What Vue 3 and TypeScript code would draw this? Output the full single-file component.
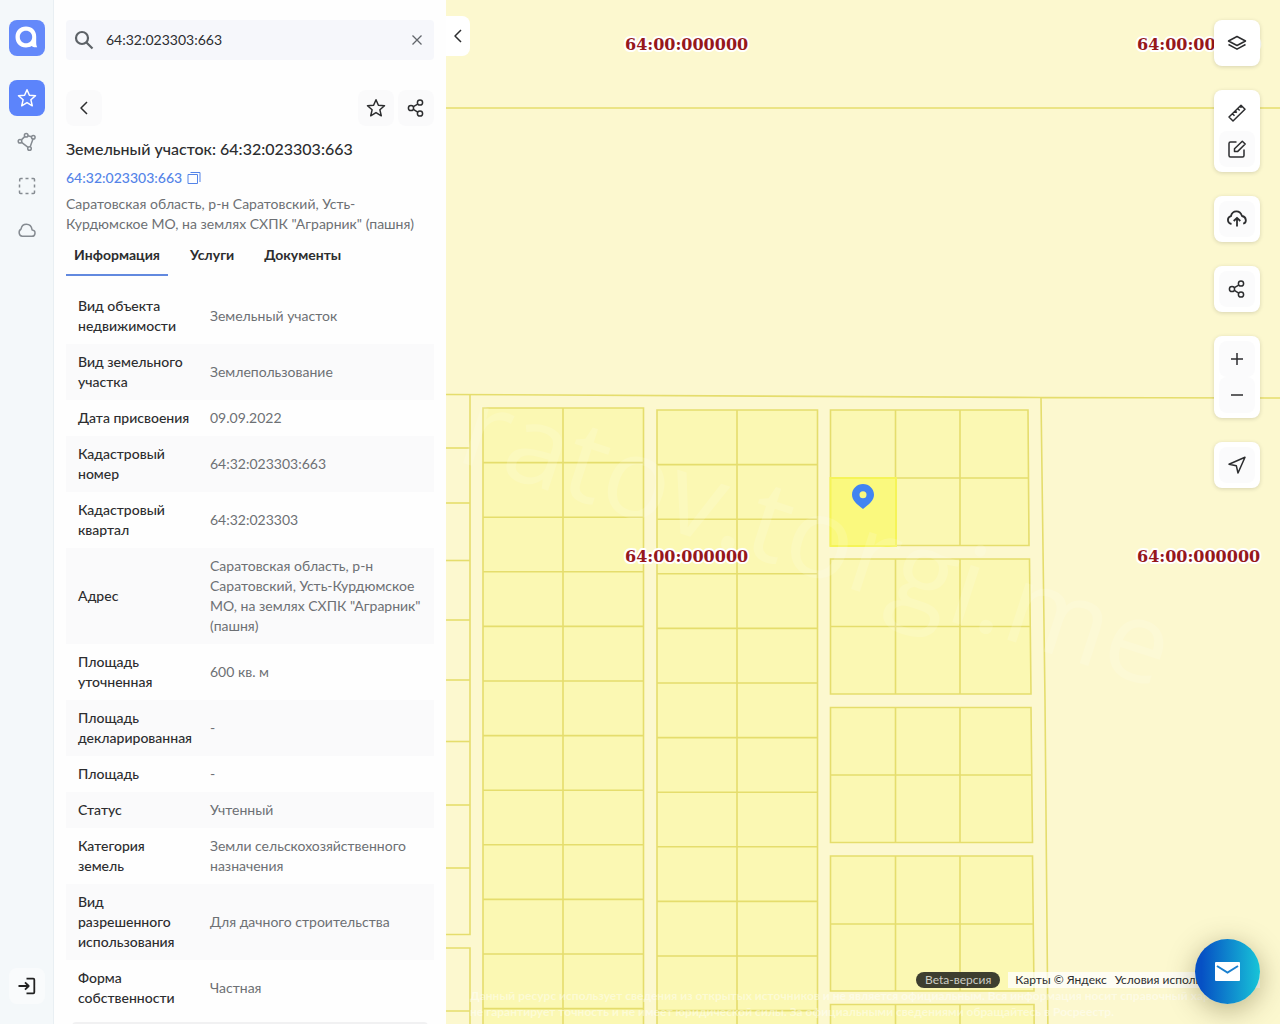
<script setup lang="ts">
import { ref } from 'vue'

interface Row { name: string; value: string }
interface Block { top: number; middle: number; bottom: number; rightTop: number; rightBottom: number }

const query = ref('64:32:023303:663')
const activeTab = ref('Информация')
const tabs = ['Информация', 'Услуги', 'Документы']

const rows: Row[] = [
  { name: 'Вид объекта недвижимости', value: 'Земельный участок' },
  { name: 'Вид земельного участка', value: 'Землепользование' },
  { name: 'Дата присвоения', value: '09.09.2022' },
  { name: 'Кадастровый номер', value: '64:32:023303:663' },
  { name: 'Кадастровый квартал', value: '64:32:023303' },
  { name: 'Адрес', value: 'Саратовская область, р-н Саратовский, Усть-Курдюмское МО, на землях СХПК "Аграрник" (пашня)' },
  { name: 'Площадь уточненная', value: '600 кв. м' },
  { name: 'Площадь декларированная', value: '-' },
  { name: 'Площадь', value: '-' },
  { name: 'Статус', value: 'Учтенный' },
  { name: 'Категория земель', value: 'Земли сельскохозяйственного назначения' },
  { name: 'Вид разрешенного использования', value: 'Для дачного строительства' },
  { name: 'Форма собственности', value: 'Частная' },
]

// Map geometry, measured from the left edge of the map
const step = 54.6
const strips = [
  { x: 37, y: 408 },
  { x: 211, y: 410 },
]
const edgeLines = [448, 503, 560.5, 620, 680, 741.5, 805, 868]
const blocks: Block[] = [
  { top: 410, middle: 478, bottom: 545.5, rightTop: 582, rightBottom: 583 },
  { top: 559, middle: 626.5, bottom: 694, rightTop: 583.5, rightBottom: 585 },
  { top: 707.5, middle: 775, bottom: 842.5, rightTop: 585, rightBottom: 586.5 },
  { top: 856, middle: 924, bottom: 991, rightTop: 586.5, rightBottom: 588 },
  { top: 1004.5, middle: 1072, bottom: 1140, rightTop: 588, rightBottom: 589 },
]
const labels = [
  { x: 179, y: 50 },
  { x: 691, y: 50 },
  { x: 179, y: 562 },
  { x: 691, y: 562 },
]
</script>

<template>
  <div class="app">
    <nav class="rail" aria-label="Разделы">
      <a class="logo" href="#" aria-label="Главная">
        <svg width="36" height="36" viewBox="0 0 36 36">
          <path fill="#fff" fill-rule="evenodd" d="M17 6.500c6 0 10.200 4 10.200 10v6.500c0 1.700.400 2.800 1 4.200-2.200.400-4.300.100-5.600-1.100-1.600 1-3.400 1.400-5.600 1.400C10.600 27.500 6.500 23 6.500 17S10.600 6.500 17 6.500Zm0 4.200c-3.600 0-6.200 2.600-6.200 6.300s2.600 6.300 6.200 6.300 6.200-2.600 6.200-6.300-2.600-6.300-6.200-6.300Z" />
        </svg>
      </a>
      <div class="rail-items">
        <button class="rail-btn active" aria-label="Избранное">
          <svg class="ico" width="20" height="20" viewBox="0 0 20 20"><path d="m10 1.700 2.400 5.600 6.100.5-4.600 4 1.400 6-5.300-3.200-5.300 3.200 1.400-6-4.600-4 6.100-.5Z" /></svg>
        </button>
        <button class="rail-btn" aria-label="Контур">
          <svg class="ico" width="20" height="20" viewBox="0 0 20 20"><circle cx="9.200" cy="3.300" r="1.800" /><circle cx="16.300" cy="5.300" r="1.800" /><circle cx="3" cy="9.300" r="1.800" /><circle cx="12.500" cy="16.500" r="1.800" /><path d="m7.700 4.600-3.300 3.300M11 3.800l3.500 1M16 7.100l-2.800 7.700M4.600 10.400l6.500 4.900" /></svg>
        </button>
        <button class="rail-btn" aria-label="Область">
          <svg class="ico" width="20" height="20" viewBox="0 0 20 20"><path d="M2.700 5.500v-2q0-1 1-1h2M8.500 2.500h3M14.500 2.500h2q1 0 1 1v2M17.500 8.500v3M17.500 14.500v2q0 1-1 1h-2M11.500 17.500h-3M5.500 17.500h-2q-1 0-1-1v-2M2.500 11.500v-3" /></svg>
        </button>
        <button class="rail-btn" aria-label="Облако">
          <svg class="ico" width="20" height="20" viewBox="0 0 20 20"><path d="M5.300 16.300h9.200a3.200 3.200 0 0 0 .6-6.400C14.600 6.500 12.400 4.200 9.400 4.200S4.500 6.300 4.100 9C1 10.800 1.700 16 5.300 16.300Z" /></svg>
        </button>
      </div>
      <button class="rail-btn login" aria-label="Войти">
        <svg class="ico heavy" width="20" height="20" viewBox="0 0 20 20"><path d="M1.500 10h10M8 6.300l3.700 3.700L8 13.700M9.500 2.700h6.800q1 0 1 1v12.600q0 1-1 1H9.500" /></svg>
      </button>
    </nav>

    <aside class="panel">
      <form class="search" role="search" @submit.prevent>
        <svg class="search-ico" width="20" height="20" viewBox="0 0 20 20"><circle cx="8" cy="8" r="6" /><path d="m12.500 12.500 6 6" /></svg>
        <input v-model="query" type="text" aria-label="Поиск" />
        <button type="button" class="clear" aria-label="Очистить" @click="query = ''">
          <svg width="12" height="12" viewBox="0 0 12 12"><path d="m1.500 1.500 9 9m0-9-9 9" /></svg>
        </button>
      </form>

      <div class="actions">
        <button class="soft" aria-label="Назад">
          <svg class="ico" width="20" height="20" viewBox="0 0 20 20"><path d="m13 4-6 6 6 6" /></svg>
        </button>
        <span class="spacer"></span>
        <button class="soft" aria-label="В избранное">
          <svg class="ico" width="20" height="20" viewBox="0 0 20 20"><path d="m10 1.700 2.400 5.600 6.100.5-4.600 4 1.400 6-5.300-3.200-5.300 3.200 1.400-6-4.600-4 6.100-.5Z" /></svg>
        </button>
        <button class="soft" aria-label="Поделиться">
          <svg class="ico" width="20" height="20" viewBox="0 0 20 20"><circle cx="5" cy="10" r="2.600" /><circle cx="14" cy="4.500" r="2.600" /><circle cx="14" cy="15.500" r="2.600" /><path d="m7.400 8.700 4.300-2.600M7.400 11.400l4.300 2.700" /></svg>
        </button>
      </div>

      <h1>Земельный участок: 64:32:023303:663</h1>
      <div class="code">
        <a href="#">64:32:023303:663</a>
        <button class="copy" aria-label="Копировать">
          <svg width="14" height="14" viewBox="0 0 14 14"><path d="M1 3.500h9.500v9H1zM3.500 1.500H13v9.500" /></svg>
        </button>
      </div>
      <p class="address">Саратовская область, р-н Саратовский, Усть-Курдюмское МО, на землях СХПК "Аграрник" (пашня)</p>

      <div class="tabs" role="tablist">
        <button
          v-for="tab in tabs"
          :key="tab"
          role="tab"
          :aria-selected="tab === activeTab"
          :class="{ current: tab === activeTab }"
          @click="activeTab = tab"
        >{{ tab }}</button>
      </div>

      <table class="info">
        <tbody>
          <tr v-for="row in rows" :key="row.name">
            <th scope="row">{{ row.name }}</th>
            <td>{{ row.value }}</td>
          </tr>
        </tbody>
      </table>
      <div class="more"></div>
    </aside>

    <main class="map">
      <svg class="plots" width="100%" height="100%" aria-label="Кадастровая карта">
        <g class="line">
          <path d="M0 108H4000M0 394.500 595 397.500 834 398H4000M595 397.500 599 700 602 1040 610 2000" />
          <path d="M24 395V934.500H0M0 948H24V2000M0 1011H24" />
          <path v-for="y in edgeLines" :key="y" :d="`M0 ${y}H24`" />
        </g>
        <g v-for="strip in strips" :key="strip.x">
          <path class="plot" :d="`M${strip.x} ${strip.y}h160.500v1200h-160.500zM${strip.x + 80} ${strip.y}v1200`" />
          <path v-for="n in 20" :key="n" class="line" :d="`M${strip.x} ${strip.y + n * step}h160.500`" />
        </g>
        <path
          v-for="b in blocks"
          :key="b.top"
          class="plot"
          :d="`M384.500 ${b.top}H${b.rightTop}L${b.rightBottom} ${b.bottom}H384.500zM384.500 ${b.middle}H${(b.rightTop + b.rightBottom) / 2}M449.500 ${b.top}V${b.bottom}M514 ${b.top}V${b.bottom}`"
        />
        <rect class="selected" x="384.500" y="478" width="65.500" height="68" />
        <text class="watermark" x="8" y="460" transform="rotate(18 8 460)">ratov.torgi.me</text>
        <path class="pin" fill-rule="evenodd" d="M417 484c6.100 0 11 4.800 11 10.800 0 5.600-5 9.600-11 14.200-6-4.600-11-8.600-11-14.200 0-6 4.900-10.800 11-10.800Zm0 7.300a3.500 3.500 0 1 0 0 7 3.500 3.500 0 0 0 0-7Z" />
        <text v-for="(l, i) in labels" :key="i" class="tile" :x="l.x" :y="l.y">64:00:000000</text>
      </svg>

      <button class="toggle" aria-label="Свернуть панель">
        <svg class="ico" width="20" height="20" viewBox="0 0 20 20"><path d="m13 4-6 6 6 6" /></svg>
      </button>

      <div class="tools">
        <div class="tool">
          <button aria-label="Слои"><svg class="ico" width="20" height="20" viewBox="0 0 20 20"><path d="m10 3.500 8.500 4.500-8.500 4.500L1.500 8ZM1.500 11.500l8.500 4.700 8.500-4.700" /></svg></button>
        </div>
        <div class="tool">
          <button aria-label="Линейка"><svg class="ico" width="20" height="20" viewBox="0 0 20 20"><path d="M2 14 14 2.200l4 4L6 18ZM5.500 10.700l2 2M8.200 8l1.600 1.600M10.700 5.500l2 2M13 3.300l1.500 1.500" /></svg></button>
          <button class="shade" aria-label="Редактировать"><svg class="ico" width="20" height="20" viewBox="0 0 20 20"><path d="M9.500 3H3.500Q2 3 2 4.500V16.500Q2 18 3.500 18H15.500Q17 18 17 16.500V10.500M15.300 2.200 18.200 5 10.500 12.600H7.500V9.800Z" /></svg></button>
        </div>
        <div class="tool">
          <button class="shade" aria-label="Загрузить"><svg class="ico heavy" width="20" height="20" viewBox="0 0 20 20"><path d="M4.500 15C0 14-.3 8.500 3.900 7.200 5.500.9 13 .8 15 7c4.700.8 5 6.800 1.200 7.600M10 17.500V9M6.700 12 10 8.800l3.300 3.200" /></svg></button>
        </div>
        <div class="tool">
          <button class="shade" aria-label="Поделиться картой"><svg class="ico" width="20" height="20" viewBox="0 0 20 20"><circle cx="5" cy="10" r="2.600" /><circle cx="14" cy="4.500" r="2.600" /><circle cx="14" cy="15.500" r="2.600" /><path d="m7.400 8.700 4.300-2.600M7.400 11.400l4.300 2.700" /></svg></button>
        </div>
        <div class="tool">
          <button class="shade" aria-label="Приблизить"><svg class="ico" width="20" height="20" viewBox="0 0 20 20"><path d="M10 4v12M4 10h12" /></svg></button>
          <button class="shade" aria-label="Отдалить"><svg class="ico" width="20" height="20" viewBox="0 0 20 20"><path d="M4 10h12" /></svg></button>
        </div>
        <div class="tool">
          <button class="shade" aria-label="Моё положение"><svg class="ico" width="20" height="20" viewBox="0 0 20 20"><path d="M18 2.200 11 18l-1.700-7.300L2 9.200Z" /></svg></button>
        </div>
      </div>

      <p class="disclaimer">
        Данный ресурс использует сведения из открытых источников и не является официальным. Вся информация носит справочный характер,<br />
        не гарантирует точность и не имеет юридической силы. За официальными сведениями обращайтесь в Росреестр.
      </p>
      <div class="credits">
        <span class="beta">Beta-версия</span>
        <div class="links"><a href="#">Карты © Яндекс</a><a href="#">Условия использования</a></div>
      </div>
      <button class="mail" aria-label="Написать нам">
        <svg width="26" height="20" viewBox="0 0 26 20"><rect width="25" height="19" rx="1" fill="#fff" /><path d="m2 4 10.500 6.500L23 4" fill="none" stroke="#1b80cf" stroke-width="2" /></svg>
      </button>
    </main>
  </div>
</template>

<style>
body { margin: 0; }
</style>

<style scoped>
.app {
  display: flex;
  height: 100vh;
  overflow: hidden;
  font: 400 14px/20px Lato, "Noto Sans", sans-serif;
  color: #2c2d2f;
}
button {
  padding: 0;
  border: 0;
  background: none;
  font: inherit;
  color: inherit;
  cursor: pointer;
}
a { color: inherit; text-decoration: none; }
svg { display: block; }
.ico {
  fill: none;
  stroke: currentColor;
  stroke-width: 1.5;
  stroke-linejoin: round;
}
.ico.heavy { stroke-width: 1.8; }

.rail {
  flex: 0 0 54px;
  box-sizing: border-box;
  display: flex;
  flex-direction: column;
  align-items: center;
  padding: 20px 0;
  background: #f4f8fa;
  border-right: 1px solid #e9eff3;
}
.logo {
  background: #6489fa;
  border-radius: 8px;
}
.rail-items {
  display: flex;
  flex-direction: column;
  gap: 8px;
  margin-top: 24px;
}
.rail-btn {
  display: grid;
  place-items: center;
  width: 36px;
  height: 36px;
  border-radius: 8px;
  color: #858b91;
}
.rail-btn.active { background: #5c84fb; color: #fff; }
.rail-btn.login { margin-top: auto; background: #f9fbfc; color: #222; }

.panel {
  flex: 0 0 392px;
  box-sizing: border-box;
  padding: 20px 12px 0;
  overflow: hidden;
  background: #fefefe;
}
.search {
  display: flex;
  align-items: center;
  height: 40px;
  padding: 0 11px 0 8px;
  background: #f6f7fb;
  border-radius: 4px;
}
.search-ico { fill: none; stroke: #5d6267; stroke-width: 2.2; }
.search input {
  flex: 1;
  min-width: 0;
  padding: 0 12px;
  border: 0;
  outline: 0;
  background: none;
  font: inherit;
  color: inherit;
}
.clear svg { fill: none; stroke: #62666b; stroke-width: 1.3; }
.actions {
  display: flex;
  gap: 4px;
  margin-top: 30px;
}
.spacer { flex: 1; }
.soft {
  display: grid;
  place-items: center;
  width: 36px;
  height: 36px;
  border-radius: 8px;
  background: #fafafb;
}
h1 {
  margin: 11px 0 0;
  font-size: 16px;
  line-height: 24px;
  font-weight: 500;
}
.code {
  display: flex;
  align-items: center;
  gap: 5px;
  margin-top: 7px;
  color: #5484e8;
  font-weight: 500;
}
.copy svg { fill: none; stroke: #5484e8; }
.address { margin: 6px 0 0; color: #6d7074; }
.tabs { display: flex; gap: 14px; margin-top: 2px; }
.tabs button {
  height: 40px;
  padding: 0 8px;
  border-bottom: 2px solid transparent;
  font-weight: 700;
}
.tabs .current { border-color: #6289df; }
.info {
  width: 100%;
  margin-top: 12px;
  border-collapse: collapse;
  table-layout: fixed;
}
.info tr:nth-child(even) { background: #fafafb; }
.info th, .info td { padding: 8px 12px; text-align: left; vertical-align: middle; }
.info th { width: 115px; padding-right: 5px; font-weight: 500; }
.info td { color: #6d7074; }
.more { height: 40px; margin: 6px 6px 0; background: #f1f1f2; border-radius: 4px; }

.map {
  position: relative;
  flex: 1;
  min-width: 0;
  overflow: hidden;
  background: #fcf8cf;
}
.plots { position: absolute; inset: 0; }
.line { fill: none; stroke: #e5dd6d; stroke-width: 1.6; }
.plot { fill: #fbf8b3; stroke: #e5dd6d; stroke-width: 1.6; }
.selected { fill: #faf97e; stroke: #f5f458; stroke-width: 2; }
.pin { fill: #4184f1; }
.tile {
  font: 700 16px "DejaVu Serif", serif;
  fill: #96171c;
  stroke: #fff;
  stroke-width: 4px;
  stroke-linejoin: round;
  paint-order: stroke;
}
.watermark { font: 400 112px "Open Sans", sans-serif; fill: #fff; opacity: 0.14; }
.toggle {
  position: absolute;
  left: 0;
  top: 16px;
  display: grid;
  place-items: center;
  width: 24px;
  height: 40px;
  background: #fff;
  border-radius: 0 8px 8px 0;
}
.tools {
  position: absolute;
  right: 20px;
  top: 20px;
  display: flex;
  flex-direction: column;
  gap: 24px;
}
.tool {
  padding: 5px;
  border-radius: 8px;
  background: #fff;
  box-shadow: 0 1px 4px rgba(0, 0, 0, 0.15);
}
.tool button {
  display: grid;
  place-items: center;
  width: 36px;
  height: 36px;
  border-radius: 8px;
}
.tool .shade { background: #fbfbfc; }
.disclaimer {
  position: absolute;
  left: 24px;
  right: 0;
  bottom: 4px;
  margin: 0;
  font-size: 12px;
  line-height: 16px;
  font-weight: 700;
  white-space: nowrap;
  color: rgba(255, 255, 255, 0.45);
}
.credits {
  position: absolute;
  right: 20px;
  bottom: 36px;
  display: flex;
  gap: 8px;
  font-size: 12px;
  line-height: 16px;
}
.beta {
  padding: 0 9px;
  border-radius: 8px;
  background: #3d3e2f;
  color: #ccccc4;
}
.links {
  display: flex;
  gap: 8px;
  padding: 0 15px 0 7px;
  background: rgba(255, 255, 255, 0.75);
}
.mail {
  position: absolute;
  right: 20px;
  bottom: 20px;
  display: grid;
  place-items: center;
  width: 65px;
  height: 65px;
  border-radius: 50%;
  background: linear-gradient(90deg, #0650c4 10%, #18c4d8);
  box-shadow: 0 6px 28px rgba(60, 50, 0, 0.35);
}
</style>
